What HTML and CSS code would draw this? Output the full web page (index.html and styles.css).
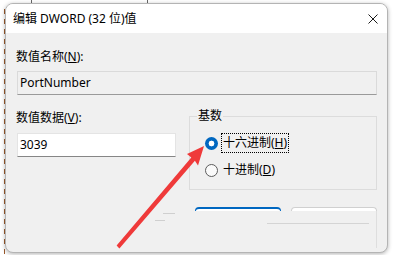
FILE: index.html
```html
<!DOCTYPE html>
<html lang="zh-CN">
<head>
<meta charset="utf-8">
<title>编辑 DWORD (32 位)值</title>
<link rel="stylesheet" href="styles.css">
</head>
<body>
<div class="window">
  <div class="titlebar">
    <span class="title">编辑 DWORD (32 位)值</span>
    <svg class="close" viewBox="0 0 10 10" aria-hidden="true"><path d="M0.5 0.5L9.5 9.5M9.5 0.5L0.5 9.5" stroke="#1a1a1a" stroke-width="1" fill="none"/></svg>
  </div>
  <div class="content">
    <label class="lbl">数值名称(<u>N</u>):</label>
    <div class="field ro">PortNumber</div>
    <div class="row">
      <div class="col">
        <label class="lbl">数值数据(<u>V</u>):</label>
        <div class="field data">3039</div>
      </div>
      <fieldset class="base">
        <legend>基数</legend>
        <div class="radio checked"><span class="circle"></span><span class="text focus">十六进制(<u>H</u>)</span></div>
        <div class="radio"><span class="circle"></span><span class="text">十进制(<u>D</u>)</span></div>
      </fieldset>
    </div>
    <div class="buttons">
      <div class="btn primary"></div>
      <div class="btn secondary"></div>
    </div>
  </div>
</div>
<svg class="arrow" viewBox="0 0 393 255" aria-hidden="true">
  <line x1="163" y1="213.5" x2="175" y2="213.5" stroke="#cfcfcf" stroke-width="1"/>
  <line x1="155" y1="220.5" x2="165" y2="220.5" stroke="#cfcfcf" stroke-width="1"/>
  <polygon points="204,146 187,154 191.3,157.6 116.6,245.4 119.4,248.6 194.9,160.8 198,165.5" fill="#ef3a3a"/>
</svg>
</body>
</html>
```
FILE: styles.css
```css
* { box-sizing: border-box; }
html, body { margin: 0; }
body {
  width: 393px;
  height: 255px;
  overflow: hidden;
  position: relative;
  padding: 3px 0 0 5px;
  font-family: "Noto Sans", "Noto Sans CJK SC", sans-serif;
  font-size: 12px;
  color: #000;
  background:
    linear-gradient(#666, #666) 31px 0 / 1px 4px no-repeat,
    linear-gradient(#666, #666) 147px 0 / 1px 4px no-repeat,
    repeating-linear-gradient(#9b5a2c 0 5px, transparent 5px 10px) 4px 9px / 1px 246px no-repeat,
    #fff;
}
.window {
  width: 383px;
  height: 250px;
  border: 1px solid #b4b4b4;
  border-radius: 8px;
  background: #f0f0f0;
  box-shadow: 0 1px 4px rgba(0, 0, 0, 0.3);
  display: flex;
  flex-direction: column;
  overflow: hidden;
}
.titlebar {
  height: 29px;
  flex: none;
  background: #fff;
  display: flex;
  align-items: center;
  justify-content: space-between;
  padding: 0 9px 0 7px;
}
.title { line-height: 16px; }
.close { width: 10px; height: 10px; display: block; }
.content {
  flex: 1;
  padding: 16px 10px 0 11px;
}
.lbl {
  display: block;
  line-height: 16px;
  margin-left: -1px;
}
.field {
  height: 24px;
  border: 1px solid #dadada;
  border-bottom-color: #9a9a9a;
  padding: 0 2px;
  line-height: 22px;
}
.field.ro {
  width: 360px;
  margin-top: 6px;
  background: #f0f0f0;
}
.row {
  display: flex;
  align-items: flex-start;
  gap: 13px;
  margin-top: 15px;
}
.col { width: 159px; flex: none; }
.field.data {
  margin-top: 7px;
  background: #fff;
  border-color: #e4e4e4;
  border-bottom-color: #868686;
}
.base {
  margin: -2px 0 0 0;
  padding: 0 0 9px 0;
  width: 188px;
  min-width: 0;
  border: 1px solid #dcdcdc;
}
.base legend {
  padding: 0 1px;
  margin-left: 7px;
  line-height: 16px;
}
.radio {
  display: flex;
  align-items: center;
  height: 20px;
  padding-left: 15px;
}
.radio.checked { margin-top: 9px; }
.radio + .radio { margin-top: 7px; }
.circle {
  width: 13px;
  height: 13px;
  border-radius: 50%;
  margin-right: 3px;
  flex: none;
  border: 1px solid #5c5c5c;
  background: #fafafa;
}
.checked .circle {
  border: none;
  background: radial-gradient(circle, #fff 0 2.6px, #0067c0 3.2px);
}
.text {
  height: 20px;
  line-height: 18px;
  padding: 0 1px;
  border: 1px dotted transparent;
}
.text.focus { border-color: #000; }
.buttons {
  position: relative;
  display: flex;
  justify-content: flex-end;
  gap: 10px;
  margin-top: 17px;
}
.buttons::after {
  content: "";
  position: absolute;
  left: 250px;
  top: 16px;
  width: 102px;
  height: 1px;
  background: #d4d4d4;
}
.btn {
  position: relative;
  width: 86px;
  height: 4px;
  border: 1px solid #d0d0d0;
  border-bottom: none;
  border-radius: 4px 4px 0 0;
  background: #fff;
}
.btn.primary { border-color: #0067c0; border-top-width: 2px; }
.btn.secondary::after {
  content: "";
  position: absolute;
  right: -1px;
  top: 3px;
  width: 1px;
  height: 37px;
  background: #dedede;
}
.arrow {
  position: absolute;
  left: 0;
  top: 0;
  width: 393px;
  height: 255px;
  pointer-events: none;
}
```
